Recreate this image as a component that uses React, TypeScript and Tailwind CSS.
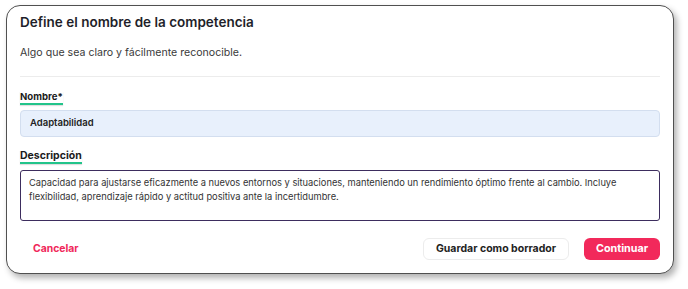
export default function App() {
  return (
    <div className="w-[688px] h-[289px] bg-white pt-[5px] pl-[6px]" style={{ fontFamily: 'Inter, "Noto Sans", sans-serif' }}>
      <div className="flex flex-col w-[668px] h-[269px] rounded-[14px] border-[1.5px] border-[#505050] bg-white shadow-[3px_4px_6px_rgba(0,0,0,0.3)] px-[13px] pt-[8px]">
        <h2 className="text-[13.5px] font-semibold text-[#1f1f2a] leading-[16px]">Define el nombre de la competencia</h2>
        <p className="mt-[16px] text-[10.6px] text-[#3a3a3a] leading-[14px]">Algo que sea claro y fácilmente reconocible.</p>
        <div className="mt-[16px] h-px bg-[#ececec]" />

        <div className="mt-[14px] flex">
          <span className="text-[9.6px] font-bold text-[#1b1b1b] leading-[12px] border-b-2 border-[#22c48a] shadow-[0_1px_1px_rgba(0,0,0,0.12)]">Nombre*</span>
        </div>
        <div className="mt-[5px] h-[27px] shrink-0 rounded-[4px] border border-[#d3deef] bg-[#e8f0fc] px-[9px] flex items-center text-[9.5px] font-semibold text-[#222]">
          Adaptabilidad
        </div>

        <div className="mt-[13px] flex">
          <span className="text-[10.5px] font-bold text-[#1b1b1b] leading-[12px] border-b-2 border-[#22c48a] shadow-[0_1px_1px_rgba(0,0,0,0.12)]">Descripción</span>
        </div>
        <div className="mt-[6px] h-[51px] shrink-0 rounded-[3px] border-[1.5px] border-[#3d2d5e] px-[8px] pt-[5px] text-[9.3px] leading-[14px] text-[#333]">
          Capacidad para ajustarse eficazmente a nuevos entornos y situaciones, manteniendo un rendimiento óptimo frente al cambio. Incluye flexibilidad, aprendizaje rápido y actitud positiva ante la incertidumbre.
        </div>

        <div className="mt-[17px] flex items-center">
          <button className="ml-[13px] text-[10.4px] font-bold text-[#f0285a] leading-[14px]">Cancelar</button>
          <div className="ml-auto flex items-center gap-[15px]">
            <button className="h-[22px] w-[146px] rounded-[6px] border border-[#ececec] bg-white text-[10.5px] font-bold text-[#222]">Guardar como borrador</button>
            <button className="h-[22px] w-[76px] rounded-[6px] bg-[#f2295b] text-[10.75px] font-bold text-white">Continuar</button>
          </div>
        </div>
      </div>
    </div>
  );
}
